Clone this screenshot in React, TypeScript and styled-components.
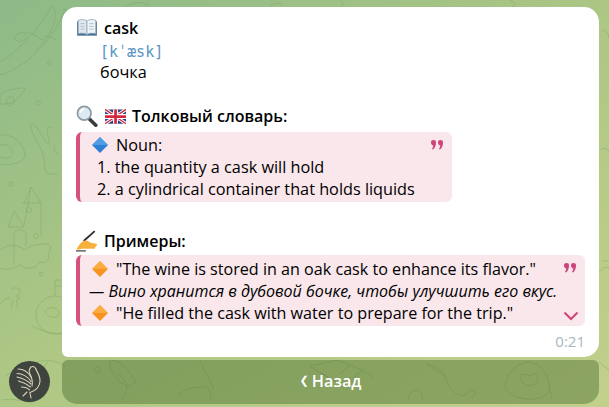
import React from "react";
import styled, { createGlobalStyle } from "styled-components";

const GlobalStyle = createGlobalStyle`
  html, body {
    margin: 0;
    padding: 0;
    height: 100%;
    overflow: hidden;
  }
  #root {
    height: 100%;
  }
`;

const Screen = styled.div`
  position: relative;
  width: 609px;
  height: 407px;
  box-sizing: border-box;
  overflow: hidden;
  padding: 7px 10px 3px 9px;
  display: flex;
  align-items: flex-end;
  gap: 12px;
  background: linear-gradient(150deg, #8dba88 0%, #aec784 50%, #c2d08c 100%);
  font-family: "Open Sans", "Noto Sans", sans-serif;
  color: #000;
`;

const Doodles = styled.svg`
  position: absolute;
  inset: 0;
  fill: none;
  stroke: #6f9a5c;
  stroke-opacity: 0.34;
  stroke-width: 1;
`;

const Avatar = styled.div`
  position: relative;
  flex: none;
  width: 41px;
  height: 41px;
  margin-bottom: 2px;
  border-radius: 50%;
  background: #3f443f;
  overflow: hidden;
`;

const Column = styled.div`
  position: relative;
  flex: 1;
  display: flex;
  flex-direction: column;
  gap: 3px;
`;

const Bubble = styled.div`
  height: 350px;
  box-sizing: border-box;
  padding: 10px 14px 0 14px;
  background: #fff;
  border-radius: 15px 15px 15px 6px;
  font-size: 16.25px;
  line-height: 22px;
`;

const Line = styled.div<{ $indent?: number; $gap?: number }>`
  display: flex;
  align-items: center;
  height: 22px;
  white-space: pre;
  padding-left: ${(p) => p.$indent ?? 0}px;
  margin-top: ${(p) => p.$gap ?? 0}px;
`;

const Heading = styled.span`
  font-size: 16px;
  font-weight: 600;
`;

const Phonetic = styled.code`
  margin-top: 4px;
  font-family: "DejaVu Sans Mono", "Liberation Mono", monospace;
  font-size: 15px;
  color: #5a94c0;
`;

const EmojiSlot = styled.svg<{ $size?: number; $right?: number }>`
  flex: none;
  width: ${(p) => p.$size ?? 22}px;
  height: ${(p) => p.$size ?? 22}px;
  margin-right: ${(p) => p.$right ?? 6}px;
`;

const Quote = styled.div<{ $width: number; $height: number; $gap: number; $pad: number; $font?: number }>`
  position: relative;
  box-sizing: border-box;
  width: ${(p) => p.$width}px;
  height: ${(p) => p.$height}px;
  margin-top: ${(p) => p.$gap}px;
  padding: ${(p) => p.$pad}px 0 0 5px;
  font-size: ${(p) => p.$font ?? 16.25}px;
  background: #f9e7ec;
  border-radius: 6px;
  border-left: 4px solid #d5527f;
`;

const QuoteMark = styled.svg`
  position: absolute;
  top: 8px;
  right: 9px;
  width: 12px;
  height: 10px;
  fill: #cf4478;
`;

const Chevron = styled.svg`
  position: absolute;
  right: 6px;
  bottom: 5px;
  width: 16px;
  height: 10px;
  fill: none;
  stroke: #cf4478;
  stroke-width: 2;
`;

const Translation = styled.em`
  font-size: 15.97px;
`;

const Time = styled.div`
  margin: 5px 0 0 0;
  text-align: right;
  font-size: 15px;
  line-height: 20px;
  color: #a9b7c3;
`;

const BackButton = styled.button`
  height: 44px;
  padding: 0 0 3px;
  border: 0;
  border-radius: 6px 6px 15px 15px;
  background: rgba(70, 105, 40, 0.42);
  color: #fff;
  display: flex;
  align-items: center;
  justify-content: center;
  gap: 3px;
  font-family: "Open Sans", "Noto Sans", sans-serif;
  font-size: 16.25px;
  font-weight: 600;
`;

const BackGlyph = styled.span`
  font-family: "DejaVu Sans", sans-serif;
  font-size: 11px;
  font-weight: 700;
`;

const Book = () => (
  <EmojiSlot viewBox="0 0 20 20">
    <path d="M1 4h18v13H1z" fill="#4d7596" />
    <path d="M2 3c3-1 6-1 8 .6V16c-2-1.400-5-1.500-8-.8z" fill="#dfe8ee" stroke="#7d97ab" strokeWidth=".6" />
    <path d="M18 3c-3-1-6-1-8 .6V16c2-1.400 5-1.500 8-.8z" fill="#eef3f6" stroke="#7d97ab" strokeWidth=".6" />
    <path d="M4 6h4M4 8.500h4M4 11h4M12 6h4M12 8.500h4M12 11h4" stroke="#a9bac7" strokeWidth=".8" />
  </EmojiSlot>
);

const Magnifier = () => (
  <EmojiSlot viewBox="0 0 20 20">
    <path d="M11.500 12l6.500 6.500" stroke="#3c3c3c" strokeWidth="3.200" strokeLinecap="round" />
    <circle cx="7.500" cy="7.500" r="6.200" fill="#dbe9f2" stroke="#8d9aa3" strokeWidth="1.600" />
    <path d="M4 7c.3-2 1.500-3 3.500-3.300" stroke="#fff" strokeWidth="1.400" fill="none" />
  </EmojiSlot>
);

const BritishFlag = () => (
  <EmojiSlot viewBox="0 0 20 20">
    <rect x="1" y="4" width="19" height="13" rx="1" fill="#27407f" />
    <path d="M1 4l19 13M20 4L1 17" stroke="#fff" strokeWidth="3" />
    <path d="M1 4l19 13M20 4L1 17" stroke="#d3283f" strokeWidth="1.200" />
    <path d="M10.500 4v13M1 10.500h19" stroke="#fff" strokeWidth="4.500" />
    <path d="M10.500 4v13M1 10.500h19" stroke="#d3283f" strokeWidth="2.500" />
  </EmojiSlot>
);

const Writing = () => (
  <EmojiSlot viewBox="0 0 20 20">
    <path d="M7 10L17 1" stroke="#2b2b2b" strokeWidth="1.600" />
    <path d="M0.500 17.500c2-4 5-7.500 8-8 2 .3 3.500 1 5 2.200l5 .8c1 .8.700 2-.5 2.300l-1 2.200H5c-2 .8-3.500 1-4.500.5z" fill="#f7b13b" />
    <path d="M0 19h9" stroke="#2b2b2b" strokeWidth="1" />
  </EmojiSlot>
);

const Diamond = ({ light, dark }: { light: string; dark: string }) => (
  <EmojiSlot viewBox="0 0 20 20" $size={20}>
    <path d="M10 2l8 8-8 8-8-8z" fill={light} />
    <path d="M10 2l8 8H2z" fill={dark} fillOpacity=".55" />
  </EmojiSlot>
);

const QuoteIcon = () => (
  <QuoteMark viewBox="0 0 12 10">
    <path d="M0 2.200C0 .7 1 0 2.500 0S5 .7 5 2.400C5 5 4 7.800 2 9.500L1 9c.8-1.200 1.200-2.300 1.300-3.500C.8 5.500 0 4 0 2.200z" />
    <path d="M7 2.200C7 .7 8 0 9.500 0S12 .7 12 2.400c0 2.600-1 5.400-3 7.100L8 9c.8-1.200 1.200-2.300 1.300-3.500C7.800 5.500 7 4 7 2.200z" />
  </QuoteMark>
);

const App = () => {
  return (
    <>
      <GlobalStyle />
      <Screen>
        <Doodles viewBox="0 0 609 407">
          <path d="M0 75C25 68 52 42 66 8M0 62C18 52 40 28 52 5c8 12 0 30-16 45M14 38c4-6 10-8 12-3s-8 10-12 3zM26 32c5 0 10 4 16 8 3-6 8-4 14 0" />
          <path d="M0 104c12 2 22-8 25-16-8 0-18 2-25 6zM6 100c2-4 8-4 8 0 2 2-2 6-6 6z" />
          <circle cx="38" cy="103" r="2.300" />
          <circle cx="49" cy="63" r="1.500" />
          <path d="M0 135c12-2 24 8 25 20 0 6-10 11-25 9M0 145c6-2 12 2 12 8s-6 6-12 4" />
          <path d="M52 128c-4-3-6 0-4 8 2 6 2 10-2 6-4-5-12-22-15-18-2 6 8 20 12 30 2 10 1 18 6 20l9 0M55 145c-2 0 0 10 3 8" />
          <path d="M8 227l6-16 10 16zM24 225l7-38 10 16v33M22 203h19M24 203l7-16M14 264v-30c2-6 10-6 12 0v12" />
          <circle cx="29" cy="210" r="2.500" />
          <circle cx="36" cy="236" r="2.500" />
          <path d="M0 250c8-6 18-6 24 0 8-6 18-6 24-6 4 2 3 8 0 10 2 6-2 10-8 8-4 8-16 8-20 2-6 6-14 6-20 4" />
          <circle cx="41" cy="274" r="1.800" />
          <circle cx="11" cy="184" r="2.300" />
          <path d="M12 290c-2-2 8-4 8 1 0 3-2 4-4 5l4 2-3 2v8M13 300l-2 9M0 304c3-4 7-6 10-6" />
          <circle cx="55" cy="315" r="19" />
          <path d="M32 326c8 4 20 8 30 8M45 312c2-6 12-6 14 0s-10 8-14 0zM55 296v-16h8v6h-8" />
          <path d="M5 377c18-16 50-22 60-10M48 362c-5 4-5 8 0 12M2 400c10-2 15 0 30 3" />
          <path d="M125 7c10-6 15-5 25-2M270 6c4-3 8-4 12-2M340 0c4 3 4 7 0 7M510 0c6 3 6 5 2 7" />
          <path d="M110 360c-2 10 6 22 18 26l8-4c-6-10-14-22-26-22zM122 400c10-14 2-24-6-26" />
          <path d="M200 361l14 28M178 395c8-8 22-8 28-8 4 2 6 8 4 13M94 370a3 3 0 1 1 0 .1" />
          <path d="M310 366l34 22 18-18-24-10zM320 372l22 14M340 374l10-10M362 370l12 8" />
          <path d="M427 364l18 12c2 8 8 18 16 20 4-1 8-4 8-6 6 0 10 4 2 8M445 376c-2-4-8-10-18-12" />
          <path d="M505 388c0-14 12-26 26-26 12 4 20 16 18 30-6 10-36 10-44-4zM520 378c2-6 8-4 10-2 4-4 8-2 8 2 0 6-8 8-10 8-2-2-8-4-8-8zM549 390c4 4 4 8 0 10" />
          <path d="M408 400c0-6 4-10 8-10s8 6 6 10" />
          <path d="M599 272c6-6 10-6 10-2M602 262a5 5 0 0 1 7 0M599 362c4 4 8 6 10 8M602 30c4 0 7 4 7 8M601 150c3-3 6-2 8 2" />
        </Doodles>
        <Avatar>
          <svg viewBox="0 0 41 41" width="41" height="41" fill="none" stroke="#d9d2b8" strokeWidth="1.100" strokeLinecap="round">
            <path d="M27 8c-1-2-3-3-5-2-2 2-2 5-1 7 2 4 3 8 2 12" />
            <path d="M26.500 7.500c2 4 5 8 4.500 13-.5 5-4 9-10 11" />
            <path d="M9 8c5 0 10 3 13 8M8 12.500c5 0 11 3 14 8M8 16c4 1 10 3 14 7M9.500 20c4 1 8 3 12 6M12.500 26c3 0 6 1 8 3" />
            <path d="M18 31l-4 4M21 32l1 5" />
          </svg>
        </Avatar>
        <Column>
          <Bubble>
            <Line>
              <Book />
              <Heading>cask</Heading>
            </Line>
            <Line $indent={24}>
              <Phonetic>[kˈæsk]</Phonetic>
            </Line>
            <Line $indent={24}>бочка</Line>
            <Line $gap={22}>
              <Magnifier />
              <BritishFlag />
              <Heading>Толковый словарь:</Heading>
            </Line>
            <Quote $width={376} $height={70} $gap={5} $pad={2}>
              <Line $indent={5}>
                <Diamond light="#2f7fd6" dark="#6fb4f2" />
                Noun:
              </Line>
              <Line $indent={12}>1. the quantity a cask will hold</Line>
              <Line $indent={12}>2. a cylindrical container that holds liquids</Line>
              <QuoteIcon />
            </Quote>
            <Line $gap={28}>
              <Writing />
              <Heading>Примеры:</Heading>
            </Line>
            <Quote $width={509} $height={71} $gap={3} $pad={3} $font={16.14}>
              <Line $indent={5}>
                <Diamond light="#f7931e" dark="#ffc05c" />
                "The wine is stored in an oak cask to enhance its flavor."
              </Line>
              <Line $indent={4}>
                <Translation>— Вино хранится в дубовой бочке, чтобы улучшить его вкус.</Translation>
              </Line>
              <Line $indent={5}>
                <Diamond light="#f7931e" dark="#ffc05c" />
                "He filled the cask with water to prepare for the trip."
              </Line>
              <QuoteIcon />
              <Chevron viewBox="0 0 16 10">
                <path d="M1.500 1.500L8 8l6.500-6.500" />
              </Chevron>
            </Quote>
            <Time>0:21</Time>
          </Bubble>
          <BackButton>
            <BackGlyph>❮</BackGlyph>
            Назад
          </BackButton>
        </Column>
      </Screen>
    </>
  );
};

export default App;
